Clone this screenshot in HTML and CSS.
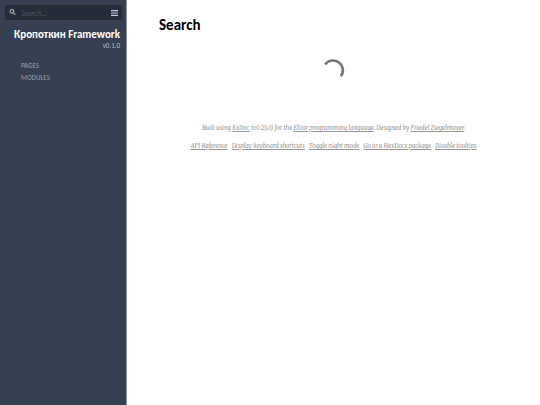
FILE: index.html
```html
<!DOCTYPE html>
<html lang="en">
<head>
<meta charset="utf-8">
<meta name="viewport" content="width=device-width, initial-scale=1">
<title>Search</title>
<link rel="stylesheet" href="styles.css">
</head>
<body>
<aside class="sidebar">
  <form class="search" role="search">
    <button class="icon-button" type="submit" aria-label="Submit search">
      <svg width="7" height="7" viewBox="0 0 12 12" fill="none" stroke="currentColor" stroke-width="1.8"><circle cx="5" cy="4" r="3.2"/><path d="M7.4 6.4 10.2 9.2" stroke-linecap="round"/></svg>
    </button>
    <input class="search-input" type="text" placeholder="Search..." aria-label="Search">
    <button class="icon-button menu-button" type="button" aria-label="Toggle sidebar">
      <svg width="7" height="6" viewBox="0 0 7 6" fill="currentColor"><path d="M0 0h7v1.2H0zM0 2.4h7v1.2H0zM0 4.8h7v1.2H0z"/></svg>
    </button>
  </form>
  <div class="project">
    <a class="project-name" href="#">Кропоткин Framework</a>
    <div class="project-version">v0.1.0</div>
  </div>
  <nav class="nav">
    <a href="#">PAGES</a>
    <a href="#">MODULES</a>
  </nav>
</aside>
<main class="content">
  <h1>Search</h1>
  <div class="loading">
    <svg width="24" height="24" viewBox="0 0 24 24" fill="none" stroke="#777" stroke-width="2.6"><path d="M3.2 6.4A9.4 9.4 0 0 1 18.9 18.2"/></svg>
  </div>
  <footer class="footer">
    <p>Built using <a href="#">ExDoc</a> (v0.23.0) for the <a href="#">Elixir programming language</a>. Designed by <a href="#">Friedel Ziegelmayer</a>.</p>
    <p class="footer-links"><a href="#">API Reference</a><a href="#">Display keyboard shortcuts</a><a href="#">Toggle night mode</a><a href="#">Go to a HexDocs package</a><a href="#">Disable tooltips</a></p>
  </footer>
</main>
</body>
</html>
```
FILE: styles.css
```css
* { box-sizing: border-box; }
body {
  display: flex;
  min-height: 100vh;
  margin: 0;
  background: #fff;
  font-family: Carlito, Lato, "Open Sans", sans-serif;
}
.sidebar {
  flex: 0 0 127px;
  min-width: 0;
  padding: 5px 4px 5px 5px;
  background: #373f52;
  border-right: 1px solid #8a8f9b;
  color: #d5dae6;
}
.search {
  display: flex;
  align-items: center;
  height: 15px;
  padding: 0 4px;
  border-radius: 2px;
  background: #272c3a;
}
.icon-button {
  display: flex;
  flex: none;
  padding: 0;
  border: 0;
  background: none;
  color: #a9afbc;
}
.menu-button { color: #c3c8d3; }
.search-input {
  flex: 1;
  min-width: 0;
  padding: 0 5px;
  border: 0;
  background: none;
  color: #969dac;
  font: 300 7px/14px Lato, sans-serif;
}
.search-input::placeholder { color: #6e7585; }
.project {
  padding: 8px 2px 0 0;
  text-align: right;
}
.project-name {
  display: block;
  color: #fff;
  font-size: 11px;
  font-weight: 700;
  line-height: 14px;
  text-decoration: none;
  white-space: nowrap;
}
.project-version {
  color: #b9bfcc;
  font-size: 7px;
  font-weight: 300;
  line-height: 8px;
}
.nav {
  display: grid;
  padding: 10px 16px;
}
.nav a {
  color: #98a0af;
  font-size: 7px;
  font-weight: 400;
  line-height: 12px;
  text-decoration: none;
}
.content {
  flex: 1;
  min-width: 0;
  padding: 16px 32px;
}
h1 {
  margin: 0;
  color: #000;
  font-size: 15px;
  font-weight: 700;
  line-height: 18px;
}
.loading {
  display: flex;
  justify-content: center;
  padding: 24px 0 40px;
}
.footer {
  color: #959595;
  font-family: Merriweather, "DejaVu Serif Condensed", "DejaVu Serif", serif;
  font-size: 6px;
  font-style: italic;
  font-variant-numeric: oldstyle-nums;
  line-height: 13px;
  text-align: center;
  white-space: nowrap;
}
.footer p { margin: 0 0 5px; }
.footer a { color: inherit; }
.footer-links {
  display: flex;
  justify-content: center;
  gap: 4px;
}
```
